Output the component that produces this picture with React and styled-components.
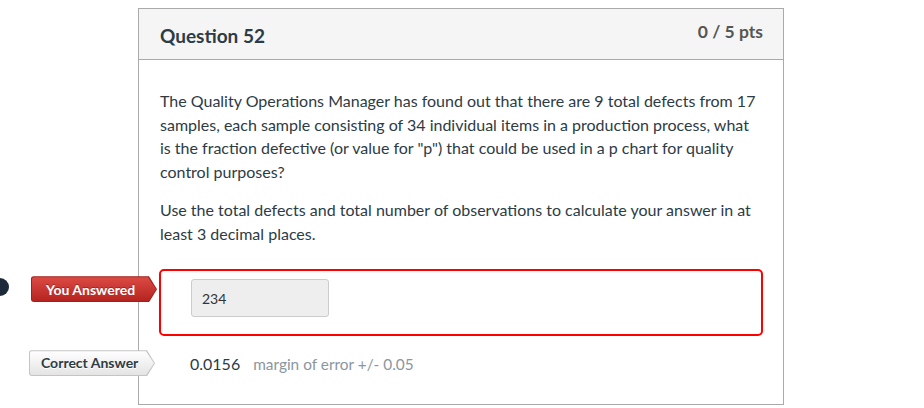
import React from "react";
import styled, { createGlobalStyle } from "styled-components";

const GlobalStyle = createGlobalStyle`
  html, body {
    margin: 0;
    padding: 0;
    background: #fff;
  }
  body {
    font-family: Lato, "Open Sans", "Liberation Sans", sans-serif;
    color: #2d3b45;
  }
`;

const Page = styled.div`
  padding: 8px 0 0 138px;
`;

const Card = styled.div`
  width: 644px;
  border: 1px solid #aaa;
  background: #fff;
`;

const Header = styled.div`
  display: flex;
  justify-content: space-between;
  align-items: flex-start;
  height: 50px;
  padding: 0 20px 0 21px;
  background: #f5f5f5;
  border-bottom: 1px solid #aaa;
`;

const Title = styled.h2`
  margin: 0;
  padding-top: 14px;
  font-size: 19px;
  font-weight: bold;
  line-height: 26px;
  color: #2d3b45;
`;

const Points = styled.div`
  padding-top: 11px;
  font-size: 17.5px;
  font-weight: bold;
  line-height: 24px;
  color: #555;
`;

const Body = styled.div`
  padding: 29px 20px 27px 21px;
`;

const Text = styled.p`
  margin: 0 0 14px;
  font-size: 16px;
  line-height: 23.7px;
  color: #2d3b45;
`;

const Answers = styled.div`
  margin-top: 24px;
  display: flex;
  flex-direction: column;
  gap: 15px;
`;

const Row = styled.div`
  position: relative;
  margin-left: -1px;
  box-sizing: border-box;
  ${(p) =>
    p.$wrong
      ? `
    height: 67px;
    border: 2px solid #f00;
    border-radius: 5px;
    padding: 8px 30px;
  `
      : `
    display: flex;
    align-items: baseline;
    gap: 13px;
    padding: 0 0 0 31px;
    height: 26px;
    line-height: 26px;
  `}
`;

const Tag = styled.div`
  position: absolute;
  left: -130px;
  top: ${(p) => p.$top}px;
  width: 126px;
  height: 26px;
  padding: 1px 9px 1px 1px;
  background: ${(p) => (p.$wrong ? "#a51f1a" : "#c4c4c4")};
  clip-path: polygon(0 0, 118px 0, 126px 50%, 118px 100%, 0 100%);
  border-radius: 3px 0 0 3px;
  box-sizing: border-box;
`;

const TagInner = styled.div`
  height: 100%;
  width: calc(100% + 8px);
  display: flex;
  align-items: center;
  padding-left: ${(p) => (p.$wrong ? 14 : 11)}px;
  box-sizing: border-box;
  clip-path: polygon(0 0, calc(100% - 8px) 0, 100% 50%, calc(100% - 8px) 100%, 0 100%);
  border-radius: 2px 0 0 2px;
  font-size: 14px;
  font-weight: bold;
  white-space: nowrap;
  color: ${(p) => (p.$wrong ? "#fff" : "#2d3b45")};
  text-shadow: ${(p) => (p.$wrong ? "0 -1px 0 rgba(0,0,0,0.3)" : "0 1px 0 #fff")};
  background: ${(p) =>
    p.$wrong
      ? "linear-gradient(to bottom, #dc4a44, #b52420)"
      : "linear-gradient(to bottom, #ffffff, #e4e4e4)"};
`;

const Dot = styled.div`
  position: absolute;
  left: -170px;
  top: 7px;
  width: 18px;
  height: 18px;
  border-radius: 50%;
  background: #1c2a3a;
`;

const AnswerInput = styled.div`
  width: 138px;
  height: 38px;
  box-sizing: border-box;
  padding: 0 10px;
  display: flex;
  align-items: center;
  background: #eee;
  border: 1px solid #ccc;
  border-radius: 3px;
  font-size: 14px;
  color: #333;
`;

const Value = styled.span`
  font-size: 16px;
  color: #2d3b45;
`;

const Margin = styled.span`
  font-size: 15.4px;
  color: #8b969e;
`;

export default function App() {
  return (
    <>
      <GlobalStyle />
      <Page>
        <Card>
          <Header>
            <Title>Question 52</Title>
            <Points>0 / 5 pts</Points>
          </Header>
          <Body>
            <Text>
              The Quality Operations Manager has found out that there are 9
              total defects from 17 samples, each sample consisting of 34
              individual items in a production process, what is the fraction
              defective (or value for "p") that could be used in a p chart for
              quality control purposes?
            </Text>
            <Text>
              Use the total defects and total number of observations to
              calculate your answer in at least 3 decimal places.
            </Text>
            <Answers>
              <Row $wrong>
                <Dot />
                <Tag $wrong $top={5}>
                  <TagInner $wrong>You Answered</TagInner>
                </Tag>
                <AnswerInput>234</AnswerInput>
              </Row>
              <Row>
                <Tag $top={-1}>
                  <TagInner>Correct Answer</TagInner>
                </Tag>
                <Value>0.0156</Value>
                <Margin>margin of error +/- 0.05</Margin>
              </Row>
            </Answers>
          </Body>
        </Card>
      </Page>
    </>
  );
}
